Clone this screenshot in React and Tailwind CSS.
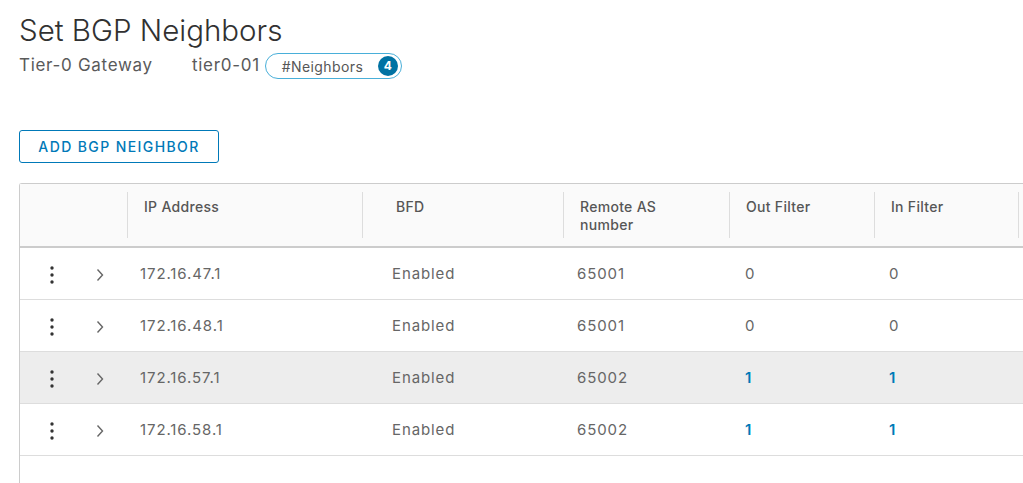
import React from "react";

const rows = [
  { ip: "172.16.47.1", as: "65001", out: "0", inn: "0", hl: false, link: false },
  { ip: "172.16.48.1", as: "65001", out: "0", inn: "0", hl: false, link: false },
  { ip: "172.16.57.1", as: "65002", out: "1", inn: "1", hl: true, link: true },
  { ip: "172.16.58.1", as: "65002", out: "1", inn: "1", hl: false, link: true },
];

function Dots() {
  return (
    <svg width="4" height="18" viewBox="0 0 4 18" className="text-[#333]">
      <circle cx="2" cy="2" r="1.7" fill="currentColor" />
      <circle cx="2" cy="9" r="1.7" fill="currentColor" />
      <circle cx="2" cy="16" r="1.7" fill="currentColor" />
    </svg>
  );
}

function Chevron() {
  return (
    <svg width="8" height="14" viewBox="0 0 8 14" className="text-[#666]">
      <path d="M1.5 1.5 L6.5 7 L1.5 12.5" fill="none" stroke="currentColor" strokeWidth="1.4" />
    </svg>
  );
}

const cols = "grid grid-cols-[107px_235px_201px_166px_145px_144px_100px]";

export default function App() {
  return (
    <div
      className="w-[1023px] h-[483px] overflow-hidden bg-white"
      style={{ fontFamily: "Inter, 'Open Sans', sans-serif" }}
    >
      <div className="pl-[19px] pt-[12px]">
        <h1 className="text-[29.5px] leading-[36px] text-[#313131] font-light">Set BGP Neighbors</h1>
        <div className="flex items-center mt-[5px] text-[17px] tracking-[0.7px] text-[#5a5a5a]">
          <span className="w-[173px]">Tier-0 Gateway</span>
          <span>tier0-01</span>
          <span className="ml-[5px] flex items-center h-[26px] w-[137px] rounded-full border border-[#49afd9] pl-[16px] pr-[3px]">
            <span className="text-[14px] tracking-[0.4px] text-[#565656]">#Neighbors</span>
            <span className="ml-auto flex items-center justify-center w-[20px] h-[20px] rounded-full bg-[#0072a3] text-white text-[12px] tracking-normal font-bold">4</span>
          </span>
        </div>
        <button className="mt-[51px] h-[33px] w-[200px] border border-[#0079b8] rounded-[3px] text-[#0079b8] text-[14px] font-medium tracking-[1.4px]">
          ADD BGP NEIGHBOR
        </button>
        <div className="mt-[20px] border-l border-t border-[#ccc] rounded-tl-[3px] w-[1100px] h-[400px]">
          <div className={`${cols} h-[64px] bg-[#fafafa] border-b-2 border-[#ccc] text-[14px] tracking-[0.3px] font-medium text-[#565656]`}>
            <div />
            {[
              ["IP Address", "pl-[16px]"],
              ["BFD", "pl-[33px]"],
              ["Remote AS number", "pl-[16px] pr-[50px]"],
              ["Out Filter", "pl-[16px]"],
              ["In Filter", "pl-[16px]"],
              ["", "pl-[16px]"],
            ].map(([t, p], i) => (
              <div key={i} className="py-[8px]">
                <div className={`h-full border-l border-[#ddd] ${p} pt-[6px] leading-[18px]`}>{t}</div>
              </div>
            ))}
          </div>
          {rows.map((r, i) => (
            <div
              key={i}
              className={`${cols} h-[52px] pt-[2px] items-center border-b border-[#ddd] text-[15px] tracking-[0.9px] text-[#666] ${r.hl ? "bg-[#ededed]" : "bg-white"}`}
            >
              <div className="flex items-center pl-[30px] gap-[42px]">
                <Dots />
                <Chevron />
              </div>
              <div className="pl-[13px]">{r.ip}</div>
              <div className="pl-[30px]">Enabled</div>
              <div className="pl-[14px]">{r.as}</div>
              <div className={`pl-[16px] ${r.link ? "text-[#0079b8] font-semibold" : ""}`}>{r.out}</div>
              <div className={`pl-[15px] ${r.link ? "text-[#0079b8] font-semibold" : ""}`}>{r.inn}</div>
              <div />
            </div>
          ))}
        </div>
      </div>
    </div>
  );
}
